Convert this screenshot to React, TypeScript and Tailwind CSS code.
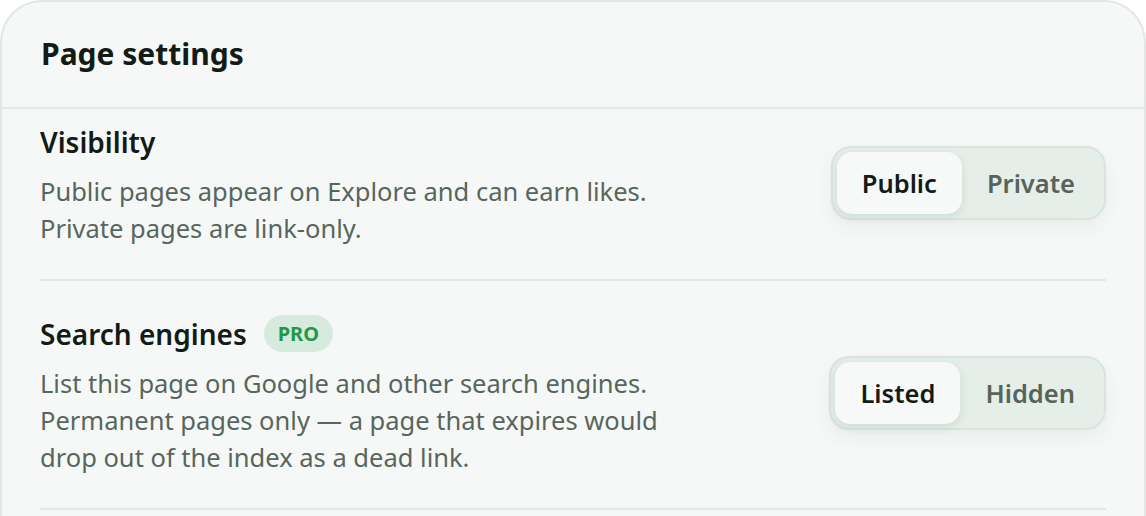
import React, { useState } from 'react';

type Option = { value: string; label: string };

function Segmented({
  options,
  value,
  onChange,
}: {
  options: Option[];
  value: string;
  onChange: (v: string) => void;
}) {
  return (
    <div className="mb-[5px] flex shrink-0 rounded-[20px] border-2 border-[#dae4de] bg-[#e5eee8] p-[4px] shadow-[0_8px_18px_rgba(30,60,40,0.06)]">
      {options.map((opt) => {
        const active = opt.value === value;
        return (
          <button
            key={opt.value}
            type="button"
            onClick={() => onChange(opt.value)}
            className={
              active
                ? 'h-[62px] rounded-[15px] bg-[#f7f9f8] px-[25px] text-[25.5px] font-semibold text-[#131b16] shadow-[0_3px_10px_rgba(30,60,40,0.10)]'
                : 'h-[62px] rounded-[15px] px-[25px] text-[25.5px] font-semibold text-[#56645b]'
            }
          >
            {opt.label}
          </button>
        );
      })}
    </div>
  );
}

function SettingRow({
  title,
  badge,
  children,
  control,
  first,
}: {
  title: string;
  badge?: string;
  children: React.ReactNode;
  control: React.ReactNode;
  first?: boolean;
}) {
  return (
    <div
      className={
        first
          ? 'flex items-center justify-between gap-8 border-b-2 border-[#e1e9e5] pt-[15px] pb-[32px]'
          : 'flex items-center justify-between gap-8 border-b-2 border-[#e1e9e5] pt-[34px] pb-[32px]'
      }
    >
      <div className="max-w-[660px]">
        <div className="flex items-center gap-[17px]">
          <h3 className="text-[28px] leading-[36px] font-semibold text-[#131b16]">{title}</h3>
          {badge && (
            <span className="rounded-full bg-[#d6ebde] px-[14px] py-[4px] text-[20px] leading-[29px] font-bold text-[#1d9a48]">
              {badge}
            </span>
          )}
        </div>
        <p className="mt-[13px] text-[25.5px] leading-[37px] text-[#57665d]">{children}</p>
      </div>
      {control}
    </div>
  );
}

export default function App() {
  const [visibility, setVisibility] = useState('public');
  const [indexing, setIndexing] = useState('listed');

  return (
    <div className="min-h-screen bg-white" style={{ fontFamily: '"Noto Sans", "Open Sans", sans-serif' }}>
      <div className="rounded-t-[42px] border-2 border-b-0 border-[#e1e8e4] bg-[#f6f8f7] pb-10">
        {/* Header */}
        <div className="border-b-2 border-[#e1e9e5] px-[39px] pt-[32px] pb-[34px]">
          <h2 className="text-[30px] leading-[39px] font-bold text-[#131b16]">Page settings</h2>
        </div>

        <div className="px-[38px]">
          <SettingRow
            first
            title="Visibility"
            control={
              <Segmented
                options={[
                  { value: 'public', label: 'Public' },
                  { value: 'private', label: 'Private' },
                ]}
                value={visibility}
                onChange={setVisibility}
              />
            }
          >
            Public pages appear on Explore and can earn likes.
            <br />
            Private pages are link-only.
          </SettingRow>

          <SettingRow
            title="Search engines"
            badge="PRO"
            control={
              <Segmented
                options={[
                  { value: 'listed', label: 'Listed' },
                  { value: 'hidden', label: 'Hidden' },
                ]}
                value={indexing}
                onChange={setIndexing}
              />
            }
          >
            List this page on Google and other search engines.
            <br />
            Permanent pages only — a page that expires would
            <br />
            drop out of the index as a dead link.
          </SettingRow>
        </div>
      </div>
    </div>
  );
}
